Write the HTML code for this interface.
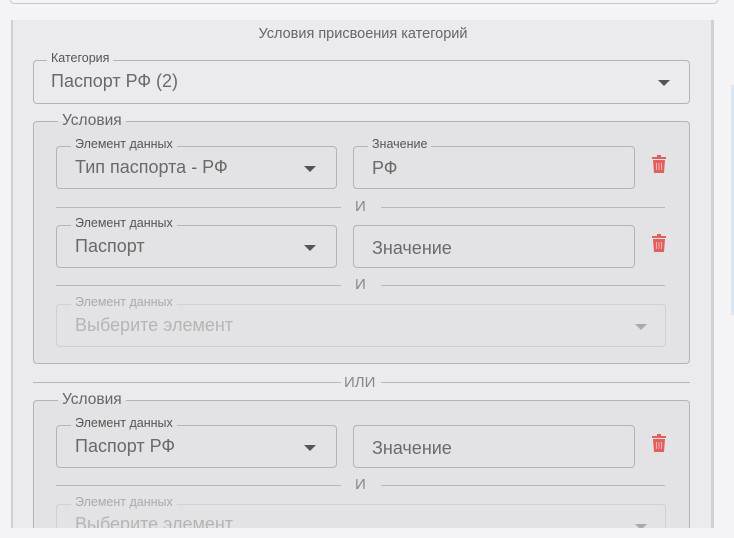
<!DOCTYPE html>
<html><head><meta charset="utf-8"><style>
*{box-sizing:border-box;margin:0;padding:0}
html,body{width:734px;height:538px;overflow:hidden}
body{background:#f4f4f6;font-family:"Liberation Sans",Arial,sans-serif;position:relative;color:#666}
.a{position:absolute}
.top{left:10px;top:-10px;width:708px;height:14px;border:1px solid #c8c8c8;border-radius:4px;background:#f4f4f6}
.panel{left:11px;top:20px;width:703px;height:508px;background:#ebebed;border-left:2px solid #cfcfd1;border-right:3px solid #d0d0d2;overflow:hidden}
.title{left:0;width:700px;top:6px;text-align:center;font-size:14.5px;color:#666}
.box{border:1px solid #b4b4b4;border-radius:4px}
.lg{position:absolute;top:-9px;font-size:12.5px;line-height:13px;padding:0 4px;color:#555;white-space:nowrap}
.val{position:absolute;left:18px;font-size:18px;color:#6a6a6a;white-space:nowrap}
.arr{position:absolute;width:0;height:0;border-left:6px solid transparent;border-right:6px solid transparent;border-top:6px solid #555}
.grp{background:#e3e3e5;border:1px solid #b4b4b4;border-radius:4px}
.line{height:1px;background:#b8b8b8}
.dis{border-color:#d0d0d0}
.and{font-size:15px;color:#888}
</style></head><body>
<div class="a top"></div>
<div class="a" style="left:731px;top:85px;width:3px;height:230px;background:#dbe6f3"></div>
<div class="a panel">
 <div class="a title">Условия присвоения категорий</div>
 <div class="a box" style="left:20px;top:40px;width:657px;height:44px">
  <span class="lg" style="left:13px;background:#ebebed">Категория</span>
  <span class="val" style="top:10px;left:17px">Паспорт РФ (2)</span>
  <span class="arr" style="left:624px;top:19px"></span>
 </div>
 <div class="a grp" style="left:20px;top:101px;width:657px;height:243px">
  <span class="lg" style="left:24px;top:-9px;font-size:15.5px;line-height:16px;background:linear-gradient(#ebebed 50%,#e3e3e5 50%);color:#666">Условия</span>
 </div>
 <div class="a box" style="left:43px;top:126px;width:281px;height:43px">
  <span class="lg" style="left:14px;background:#e3e3e5">Элемент данных</span>
  <span class="val" style="top:10px">Тип паспорта - РФ</span>
  <span class="arr" style="left:247px;top:19px"></span></div>
 <div class="a box" style="left:340px;top:126px;width:282px;height:43px">
  <span class="lg" style="left:14px;background:#e3e3e5">Значение</span>
  <span class="val" style="top:11px">РФ</span></div>
 <svg class="a" style="left:638px;top:135px" width="16" height="18" viewBox="0 0 16 18"><rect x="1" y="2" width="14" height="2" fill="#e06060"/><rect x="6" y="0" width="4" height="3" fill="#e06060"/><path d="M2 5h12l-1 13H3z" fill="#e06060"/><path d="M5.5 8v7M8 8v7M10.5 8v7" stroke="#f3b0b0" stroke-width="1"/></svg>
 <div class="a line" style="left:43px;top:187px;width:285px"></div>
 <div class="a and" style="left:342px;top:178px">И</div>
 <div class="a line" style="left:368px;top:187px;width:284px"></div>

 <div class="a box" style="left:43px;top:205px;width:281px;height:43px">
  <span class="lg" style="left:14px;background:#e3e3e5">Элемент данных</span>
  <span class="val" style="top:10px">Паспорт</span>
  <span class="arr" style="left:247px;top:19px"></span></div>
 <div class="a box" style="left:340px;top:205px;width:282px;height:43px">
  <span class="val" style="top:12px">Значение</span></div>
 <svg class="a" style="left:638px;top:214px" width="16" height="18" viewBox="0 0 16 18"><rect x="1" y="2" width="14" height="2" fill="#e06060"/><rect x="6" y="0" width="4" height="3" fill="#e06060"/><path d="M2 5h12l-1 13H3z" fill="#e06060"/><path d="M5.5 8v7M8 8v7M10.5 8v7" stroke="#f3b0b0" stroke-width="1"/></svg>
 <div class="a line" style="left:43px;top:265px;width:285px"></div>
 <div class="a and" style="left:342px;top:256px">И</div>
 <div class="a line" style="left:368px;top:265px;width:284px"></div>

 <div class="a box dis" style="left:43px;top:284px;width:610px;height:43px">
  <span class="lg" style="left:14px;background:#e3e3e5;color:#aaa">Элемент данных</span>
  <span class="val" style="top:10px;color:#b5b5b5">Выберите элемент</span>
  <span class="arr" style="left:578px;top:19px;border-top-color:#aaa"></span></div>

 <div class="a line" style="left:20px;top:362px;width:308px"></div>
 <div class="a and" style="left:331px;top:354px">ИЛИ</div>
 <div class="a line" style="left:368px;top:362px;width:309px"></div>

 <div class="a grp" style="left:20px;top:380px;width:657px;height:140px">
  <span class="lg" style="left:24px;top:-9px;font-size:15.5px;line-height:16px;background:linear-gradient(#ebebed 50%,#e3e3e5 50%);color:#666">Условия</span>
 </div>
 <div class="a box" style="left:43px;top:405px;width:281px;height:43px">
  <span class="lg" style="left:14px;background:#e3e3e5">Элемент данных</span>
  <span class="val" style="top:10px">Паспорт РФ</span>
  <span class="arr" style="left:247px;top:19px"></span></div>
 <div class="a box" style="left:340px;top:405px;width:282px;height:43px">
  <span class="val" style="top:12px">Значение</span></div>
 <svg class="a" style="left:638px;top:414px" width="16" height="18" viewBox="0 0 16 18"><rect x="1" y="2" width="14" height="2" fill="#e06060"/><rect x="6" y="0" width="4" height="3" fill="#e06060"/><path d="M2 5h12l-1 13H3z" fill="#e06060"/><path d="M5.5 8v7M8 8v7M10.5 8v7" stroke="#f3b0b0" stroke-width="1"/></svg>
 <div class="a line" style="left:43px;top:465px;width:285px"></div>
 <div class="a and" style="left:342px;top:456px">И</div>
 <div class="a line" style="left:368px;top:465px;width:284px"></div>
 <div class="a box dis" style="left:43px;top:484px;width:610px;height:30px;border-bottom:none;border-radius:4px 4px 0 0">
  <span class="lg" style="left:14px;background:#e3e3e5;color:#aaa">Элемент данных</span>
  <span class="val" style="top:9px;color:#b5b5b5">Выберите элемент</span>
  <span class="arr" style="left:578px;top:19px;border-top-color:#aaa"></span></div>
</div>
</body></html>
